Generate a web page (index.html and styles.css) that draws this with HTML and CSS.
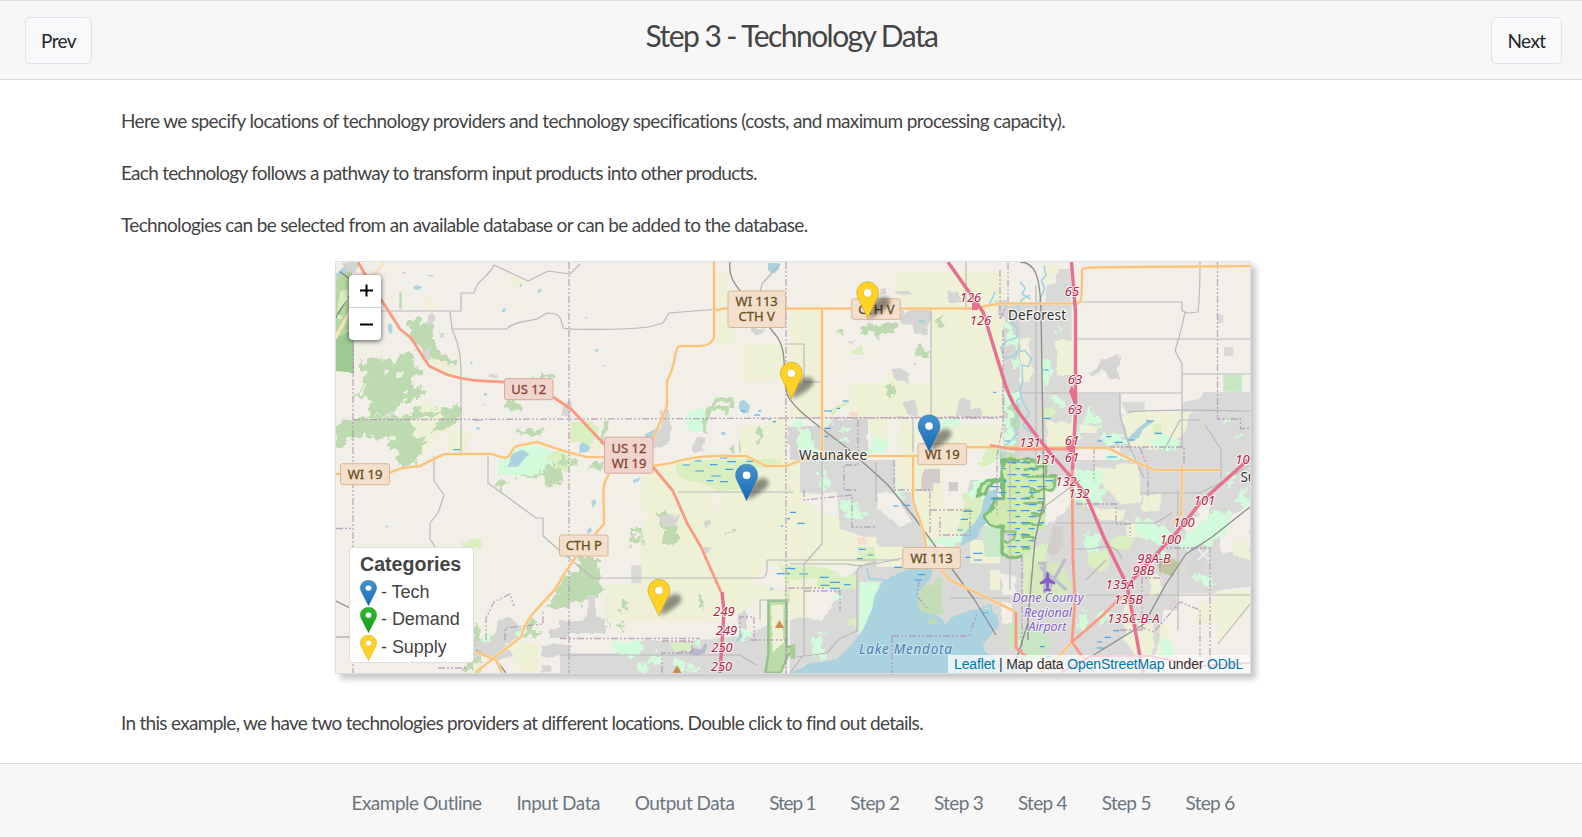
FILE: index.html
```html
<!DOCTYPE html>
<html lang="en">
<head>
<meta charset="utf-8">
<title>Step 3 - Technology Data</title>
<link rel="stylesheet" href="styles.css">
</head>
<body>
<header class="topbar">
  <button class="btn">Prev</button>
  <h1 class="title">Step 3 - Technology Data</h1>
  <button class="btn next">Next</button>
</header>
<main class="content">
  <p class="line l1">Here we specify locations of technology providers and technology specifications (costs, and maximum processing capacity).</p>
  <p class="line l2">Each technology follows a pathway to transform input products into other products.</p>
  <p class="line l3">Technologies can be selected from an available database or can be added to the database.</p>
  <div class="map">
    <svg class="tiles" viewBox="336 262 914 411" width="914" height="411">
      <defs>
        <pattern id="marsh" width="50" height="36" patternUnits="userSpaceOnUse"><path d="M2 8h27M26 26h23" stroke="#3d9ee6" stroke-width="3.500"/></pattern>
        <linearGradient id="blue" x2="0" y2="1"><stop stop-color="#4593cf"/><stop offset="1" stop-color="#1769b9"/></linearGradient>
        <linearGradient id="green" x2="0" y2="1"><stop stop-color="#35b935"/><stop offset="1" stop-color="#129c18"/></linearGradient>
        <filter id="soft" x="-50%" y="-50%" width="200%" height="200%"><feGaussianBlur stdDeviation="2"/></filter>
        <filter id="rough" x="-20%" y="-20%" width="140%" height="140%"><feTurbulence type="fractalNoise" baseFrequency=".045" numOctaves="3" seed="4"/><feDisplacementMap in="SourceGraphic" scale="44" xChannelSelector="R" yChannelSelector="G"/></filter>
        <filter id="uneven" x="-20%" y="-20%" width="140%" height="140%"><feTurbulence type="fractalNoise" baseFrequency=".03" numOctaves="2" seed="9"/><feDisplacementMap in="SourceGraphic" scale="22" xChannelSelector="R" yChannelSelector="G"/></filter>
        <g id="pin"><path d="M12.5.5C5.8.5.5 5.9.5 12.5c0 3 1.200 5.700 2.600 8.200L12.500 40.500l9.400-19.800c1.500-2.700 2.600-5.200 2.600-8.200C24.500 5.900 19.200.5 12.500.5z" stroke-opacity=".55"/><circle cx="12.500" cy="12.700" r="4.500" fill="#fff" stroke-opacity=".4"/></g>
        <path id="shade" d="M0 1 3-12C7-20 18-24 21-18S10-4 0 1z" fill="#000" opacity=".42" filter="url(#soft)"/>
      </defs>
      <rect x="330" y="255" width="930" height="425" fill="#f2efe9"/>

      <!-- land cover, north west -->
      <g transform="translate(330 255) scale(.33333)">
        <path class="wood" d="M245 192h28l2 18h28l8 22-8 20 17 10 6 28 42 22 12 16 8 8h-30l-28-12-44-18-20-30-30-30 8-22-14-14z"/>
        <path class="wood" d="M122 302l24 12 28-8 16 18 20-18 22-8 20 10 2 24 24 2-4 26-34 14 6 16 38 14-6 20-30 2-10 18-26-6-4 22-22 8 4 16h-80l16-44-18-20-34 22 30-58 12-28-30-18 2-24 22 8z"/>
        <path class="land" d="M196 352l30-4-8 14-20 6zM160 340l16 6-10 12zM216 412l20-4-6 14z"/>
        <path class="farm" d="M300 300l60 32 30 4v30l-40-8-42-28z"/>
        <path class="farm" d="M180 500l60-6 20-48 50-4 26 32 56-10-10 40-60 40-20 40-32 12-28 20-44-6z"/>
        <path class="wood" d="M15 514l60-26 100-2 60-10 24-18 20 14 50-4 30-14 34-10v44l-44 38h-46l-20 30-16 50-40 36-22-4-2-52-28-8 8-20-30-10-40-4-60 12-38 26z"/>
        <path class="farm" d="M240 500l40-16 30 6 20-16 14 14-30 20-10 26-40 20-14-10 10-24zM176 544l26 4-4 12-20-4z"/>
        <path class="wood" d="M522 430l34 10 22 14-2 12-56-4zM560 524h80l-10 26-24-8-8 10-10-14-24 12zM615 360h50v14h-50z"/>
        <path class="farm" d="M356 528h60v74h-60zM610 372h44l24 22v18h-56zM540 64l22-2 12 20-10 14-18-2zM284 118l34 36-4 14h-26z"/>
        <path d="M208 112h7v50h-7z" fill="#bddab1"/>
        <path d="M16 250l56-30v140l-14-8-42-4z" fill="#9cca91"/>
        <path d="M16 80l20-40 30-2v180l-50 36z" fill="#b5d7a0"/><path d="M16 60l40-38h20l-30 30-28 18z" class="water"/>
        <path d="M36 24h56l-20 30-24-4z" fill="#d0d4d0"/><path d="M30 50l30 22M16 190l40-66" stroke="#7f8580" stroke-width="4" fill="none"/>
        <path d="M30 110l24-8v30l-34 40zM22 180h14v12H22z" fill="#d8ecc0"/>
        <path class="water" d="M175 205l12 4v22l-8 8-5-14zM250 95l10-5 16 5-10 9-14-1zM296 60h13v4h-13zM218 50h8v5h-8zM570 84l8 8-8 4zM622 108l10-8 4 6-10 8zM515 165l10-8 2 12-10 3zM418 322l10-4-2 10zM462 414h9v8h-9zM440 516h9v8h-9zM460 445l8 6-4 2zM430 494h28v4h-28z"/>
        <path class="town" d="M292 180l20-4 4 14-12 22-14-8zM326 230l18 10 4 14-14-4zM284 288l22-4-8 22-16 2zM530 372h28v8h-28zM478 356h24v14h-24zM706 466l14-10v30l-14-2z"/>
        <path d="M540 588l60-20 70 20 50 12v36H500z" fill="#d2fbdb"/><path class="water" d="M545 598l30-14 24 12-26 26-40 12z"/>
        <path class="pale" d="M650 600l40-12 30 14v28h-70z"/><path d="M370 584h20" class="blue"/>
      </g>

      <!-- land cover, north centre -->
      <g transform="translate(560 255) scale(.33333)">
        <path fill="#eff1d7" d="M466 54l36 4v50l20-4v165h-56zM545 266h135v362H500l40-40v-78h86v-54l-24-20v-56h-57z"/>
        <path class="land" d="M600 376h70v110h-70zM500 270h44v240h-44z"/>
        <path class="pale" d="M30 500h64l26 30-28 38-62-4z"/><path class="farm" d="M86 566l50-10-6 30-40 10z"/>
        <path class="mint" d="M378 478l28-18h26v66h-50z"/>
        <path d="M436 534l-4-40 12-30 20-26 20-6 30 6v24M456 460l44-2 4 26" fill="none" stroke="#bddab1" stroke-width="11" class="wobble"/>
        <path class="wood" d="M592 516h17v34l-14 12-6-24zM500 586l24-10 6 30-16-2zM0 604l40 4 20 20H0z"/>
        <path d="M536 540l8 50-6 4zM130 500l16-6-2 30-12 14-6 30h-7l6-40 8-10z" fill="#bddab1"/>
        <path class="town" d="M300 466l24-4 4 40 4 50-20 26h-30l-14-18 24-36 12-10zM404 545l30 6-4 36-24 8-12-16 10-8zM572 218l46 4-22 20-22-10zM8 456l28-16 4 24-34 24z"/>
        <path class="water" d="M625 24h32v18l-12 12h-14l-8-12zM538 440l14-6 18 18-4 20-16 4-14-16zM256 538l34-18-6 24-22 10-6-6zM58 570l12-8 22 14-8 14-26 4zM106 282h8v8h-8zM484 530h12v10h-12zM76 186h6v4h-6zM130 330h6v4h-6z"/>
        <path class="blue" d="M542 468h14M594 468h10M582 480h18M604 492h10M624 492h8M638 500h10"/>
        <path class="mint" d="M700 490h20v100h-20z"/><path class="town" d="M682 516h38v54h-38z"/>
      </g>

      <!-- land cover, Waunakee to DeForest -->
      <g transform="translate(790 255) scale(.33333)">
        <path fill="#eff1d7" d="M0 165h105v325H0zM315 50h330v440H180V382h110v-32h130V165l-85-4v-38h-20z"/>
        <path class="land" d="M306 270h114v110h-70l-40-30z"/>
        <path class="wood" d="M216 214l36-8 16 10 48-8-2 22-36 2-12 14-24-14-30 2zM370 276l20-8 26 20v22l-30-4zM436 196l20-8 4 20-14 12-14-8zM288 396l28-4-2 28-26-2zM358 328l20-4-10 12zM138 230l20-6 10 12-16 4z"/>
        <path class="pale" d="M180 288l32-16 10 28-42-2zM106 474l60-38 14 6-54 44z"/>
        <path class="town" d="M332 165h88v40l-8 36-40-4v-24l-40-6zM476 106l34 6v32h-34zM314 108h38l10 10-24 6-24-8zM268 102h20v18h-16zM306 346l30-4 22 14-2 26-34-10zM344 440l34-8 6 18-4 34-30-4zM504 434h38v24l30 4v26h-70zM168 262l34-10-24 18z"/>
        <path class="town" d="M40 516h64l30-24h100v138H0v-100zM640 150h80v480h-80zM612 140l40-6v60l-30-18z"/>
        <path fill="#eff1d7" d="M240 492h130v138h-40v-60l-90-20zM376 510h262v60l-80 4-190-20z"/>
        <path class="mint" d="M236 560l52-16v50h-44zM448 496l56-6v24l-48 4zM38 516l40 60 16 20-60-10-20-30zM650 200l18 4v30l20 50-40-20zM645 434h30v160h-30z"/>
        <path class="mint" d="M92 494l40 8-24 16zM134 516l44 4-8 24zM140 550l40 6-8 14zM656 316l44-4-20 26zM640 410l60 10-8 40-46 10z"/>
        <path class="pale" d="M604 572h30v30l-40 28h-30z"/><path class="wood" d="M664 450l24-10 20 30-14 40-28 20zM640 590l40 4v34h-40z"/>
        <path class="peach" d="M176 474l30-6-2 14-24 8z"/><path class="land" d="M286 500h40v60h-40z"/>
        <path class="water" d="M386 194h20v10h-20z"/>
        <path class="blue" d="M158 438h18M102 468h24M140 460h10M104 520h18M104 544h10M610 412h8M646 558h16M652 574h12"/>
        <path class="stream" d="M720 120l-22 12-14 20 8 20-28 30 20 20-4 26-30 10-18 20 12 34 30-10 14-24 20 6 12 30-20 20 8 34-20 30 12 20-20 20 6 30-14 40 10 30-24 24-26 20v60M720 190l-20 16M616 110l-14 30-8 16"/>
      </g>

      <!-- land cover, north east -->
      <g transform="translate(1020 255) scale(.33333)">
        <path fill="#d9d9d8" d="M0 150h155v480H0zM80 90l28-6v-42h44v100H76zM162 416h138v56l24 20 10 86H162zM304 440h70v28l-50 20zM490 440l50-8 10-20 140-2v220H300v-60h100l80-40zM612 276h28v28h-28zM594 178l16 2v24h-16z"/>
        <path class="town" d="M240 312l36-6 28-6-4 30-14 10 16 36-34-4-16-32-28 22-20-6 30-16z"/>
        <path class="farm" d="M0 250h26l10 90-8 40H0zM108 256h52v104h-52zM302 488l40-16h178l-40 80-60 26h-86zM78 500h80v76H78zM180 510h50v24h-50zM72 30l40 4-4 24-36 26z"/>
        <path class="mint" d="M100 230l26-12-6 14zM68 300l36 44-30 60-8-20zM86 410l32 10 22 30-16 8-30-20zM196 482l20-34 8 34 26 14-4 18-30-10-20 8zM170 510l20 36-12 14zM250 540l60-4 8 28-44 10-30-12zM380 552l60-12 40 28-20 20-60-10zM262 590l30 14 40-6 26 20-60 12-50-4zM612 496l28-20-6 24zM650 530l14 8-8 12z"/>
        <path class="pale" d="M66 460l36-6 8 26-44 18zM394 512h30v30l-20-6z"/><path fill="#c7e7c5" d="M610 360h56v50h-56z"/>
        <path class="water" d="M322 552l34-34 28-22 16 4-30 22-14 26-26 12z"/>
        <path class="stream" d="M72 32l6 30-14 14 10 24-10 24-8 20M0 80l16 20-10 16 26 16M0 290l14-4 20 24-8 24-20-4 2 50-8 26 8 36 20 30-20 40 30 24"/>
        <path class="blue" d="M70 345h16M378 498h24M404 535h22M324 555h20M260 545h14M284 562h24M232 558h14M262 606h28M70 490h22"/>
        <path class="water" d="M300 612h10v8h-10z"/>
      </g>

      <!-- land cover, south west -->
      <g transform="translate(330 460) scale(.33333)">
        <path fill="#d2fbdb" d="M506 0h160v44H504z"/><path class="water" d="M544 0h36l-16 20h-34z"/>
        <path class="pale" d="M666 0h54v34l-54-4zM392 244l20 6 8-14h28v26h-56z"/>
        <path class="wood" d="M506 56h24v18l-16 20-10-12zM546 44l64 4 30-12 10-20 44 12 6 20-20 34-30-8-14-20-40 4zM720 360l-40 24 10 14-30 20-12 30 48-8 24 10zM590 484l24 2 4 26 16 12-46 10-12-12zM390 584l56-4 6 56h-46z"/>
        <path class="town" d="M430 540l60-16 14-34 40-22 20 20 10 40-30 20 14 30-48 26-40-14h-40zM636 552h84v40h-84zM660 506h60v28h-60zM634 616h30v22h-30z"/>
        <path class="mint" d="M440 540l40-24 4 30zM560 510l26 14-22 12z"/><path class="farm" d="M526 550h100v86h-56zM432 610h20v24h-20z"/>
        <path class="wood" d="M432 490h14v40l20 14-34 10z"/><path class="water" d="M166 197h8v5h-8z"/>
      </g>

      <!-- land cover, south centre -->
      <g transform="translate(560 460) scale(.33333)">
        <path fill="#eff1d7" d="M250 40L350 0h370v310l-100 8-40 54 140 30v30H575l-80 50H134V374l108-2V264l16-110-20-20z"/>
        <path class="land" d="M460 100h26v50h-26zM575 424h50v130h-50z"/>
        <path class="pale" d="M350 12l100-14h210v20l-70 4 4 36-56 30-60 6-60-26-60-16z"/>
        <path class="pale" d="M690 20h30v100l-30-20zM660 318l60 6v50l-40-4z"/>
        <path class="wood" d="M0 0h20v16H0zM0 350l30-12 18 4 10-54h54v42l14 10-4 62-26 4-14 24-50-8-20 10-12-10zM292 154h26v14l34 30 2 40-34 22-24-10 20-24-10-8zM496 222l20-20 18-2-16 14zM412 408l24-4-2 42-16-4zM176 430l28-8-2 36-20-6zM180 486l20 6-16 20zM80 620h48l-10 20H70zM140 486l8 12-8 8zM100 8l34 4-14 24-36-8z"/>
        <path d="M214 204h34v48l-8-16v-22h-18l-2 14 20 10-4 20-26-12z" class="wood"/>
        <path class="town" d="M0 482l60-2 24-24v-54h24v74l28 4v42H0zM296 170l64-8-16 34-34 12zM430 190l24-6 2 14-20 6zM430 262l24-4-20 20zM534 460l30-10-4 60-24-6z"/><path d="M214 316h30v54h-30zM0 580h160l44-8 50-34 76 8 94-6 60-6 80-10 60-30 30 30v120H0z" fill="#d9d9d8"/>
        <path class="mint" d="M164 548l80-10 2 30-20 20-46-6-30-16zM264 594l22-14 24 16-10 14-34-2zM230 610l40 6-20 20zM344 598l28 4 2 36-20-6zM380 626l40-8v20zM404 530l26 12-18 12zM528 520l24-10 28 10-40 24z"/>
        <path d="M352 564l30-6 40 12 14-20 6 2-8 26-24 10-30-10-24-4z" fill="#b9b9cc"/>
        <path class="pale" d="M330 550l60-6 10 22-50 12zM672 390h48v46h-48z"/>
        <path class="water" d="M220 60l22-8-6 12-16 6zM94 124l12-8 2 14-10 14zM82 210l10-10 4 14-14 8zM60 432l10 6-4 6zM630 383h10v8h-10zM530 536l20-20-6 20-18 12z"/>
        <path d="M625 422h55v140l28-8v30l-22-2-24 56h-46l8-50h1z" fill="#bbdca8" stroke="#91c387" stroke-width="7"/><path class="farm" d="M634 434h36v110l-32 34z"/>
        <path class="blue" d="M368 15h22M404 3h20M450 14h22M406 33h26M454 48h28M502 5h26M496 28h24M480 65h24M534 70h16M690 157h18M682 176h14M700 190h20M678 325h18M650 341h24M680 341h40M662 198h8M430 -8h22M480 -6h22M560 4h20M440 62h20"/>
      </g>

      <!-- land cover, Lake Mendota -->
      <g transform="translate(790 460) scale(.33333)">
        <path fill="#eff1d7" d="M0 0h100v60l-60 60 60 42 70 18 34 50v84H0zM0 360h200v110H0z"/>
        <path fill="#d9d9d8" d="M30 0h288v96h94l10 160 60 16 20-40 60-40 160 40v408H120l-70-30-40 30H0V480l80-20 60-80 70-60 100-20-60-60-100-34-10-110-50 6-60-4V20zM540 60l60 0v100h-80z"/>
        <path fill="#eff1d7" d="M370 0h90v140l74 14-10 60-60 28-60-14-30-110h-4zM316 0h54v90h-54zM448 150l90-8-20 60-68-10zM200 230h60v80h-58zM260 260h80v60h-80zM540 240h90v70h-90zM20 400l30-6v80H0v-50zM600 330h30v60h-30z"/>
        <path class="pale" d="M80 350l120-6v48l-110-8zM200 260h54v46h-50zM0 320l110 4 50 18-70 10H0zM520 100h64l-10 90-50 40h-26l20-60zM176 470h24v30l-30-12z"/>
        <path class="mint" d="M100 30l20 34-16 30-20-44zM140 120l60 8 28 44-40 10-28-26zM410 240l110-16 10 20-40 16-80-4zM540 66h44v50l-44-6zM60 530l50-10-16 40 12 44-36-26zM110 390l40 20-20 20zM280 120l24 10-16 20zM330 60l20 40-24 20z"/>
        <path d="M210 366h58l-4 40-24 56-30 80h-4z" fill="#d2fbdb"/><path d="M575 200h62v90h-52z" fill="#c9e9ca"/>
        <path class="land" d="M260 100h48l58 80-34 20-70-50zM50 400l90-8-16 50-26 40-44-10zM416 260h40v20h-40zM636 430h30v60h-30zM636 344h44v60h-44z"/>
        <path class="peach" d="M204 232h26v22h-26z"/><path d="M404 26h46v44h-20v24h-36V50zM476 66h28v28h-28z" fill="#d2cdca"/>
        <path fill="#aad3df" d="M0 640l40-20 10-8 90-14 40-40 40-50 26-60 8-42 24-40 50-28 54-20 46 12-8 30-14 10-6 66 18 20 40 20 8 20 16-22 22-10 40-14 54-2 26 22 4 24-22 26-28 34 8 22 50 28 60 14v42zM588 96l40-12-8 20-10 40-12 36-30 30-4 22-18 10-36 16 10-36 34-34 18-30z"/>
        <path d="M384 400l20-24 30-2 4-20h18v90l8 14-30 6-40-8-10-20z" fill="#c4ddb7"/><path class="wood" d="M412 474l26 6-6 22-14-6z"/>
        <path class="fen" d="M636 0h94v310l-40-22-34 6-20-12v-80l-40-10-12-26 24-20v-30h30V60l-30 6-20 34-26 12 10-30 20-20 44-6z"/>
        <path d="M640 215h36l-4 22-22 12-12-10z" fill="#dddcd4" stroke="#8bc484" stroke-width="7"/>
        <path fill="url(#marsh)" d="M640 0h80v280h-70V120h-50V70h40z"/>
        <path class="blue" d="M0 157h18M22 190h22M0 326h16M28 342h26M90 352h26M120 367h30M92 376h26M120 385h30M162 374h20M206 268h22M200 296h18M234 285h16M312 322h24M372 360h24M384 344h20M520 154h28M512 178h22M550 280h28M552 300h24M526 292h16M310 138h16M340 136h20M580 458h14M502 210h16"/>
        <path d="M562 450l40-14 4 20-34 16-14-10zM578 438l14 32" class="stream"/><path class="stream" d="M230 324l8 32 60 6 10-14"/>
        <path d="M652 490h68v70l-68-2z" fill="#cfe6c4"/><path d="M0 556l16-4v44H0z" fill="#a9cc99"/>
      </g>

      <!-- land cover, south east -->
      <g transform="translate(1020 460) scale(.33333)">
        <path fill="#d9d9d8" d="M80 0h610v380l-90 10-80 60-90 0-20 190H0V300l30-60z"/>
        <path class="land" d="M80 40l50 20 30 60-20 30-60 50-10-60zM540 120l30 4v60l-60 50-20-30 50-40zM600 190l90-60v150h-90zM0 520h60v120H0z"/><path d="M470 400h220v240H400l30-120 40-40z" fill="#f2efe9"/>
        <path class="farm" d="M290 10h70v120h-64l-50-60h-30V22h74zM196 130l60 20h60v30H220zM366 104h56v50h-56zM310 430h30v60h60v120h-36l-50-70zM320 180h50v54h-50zM392 346h30v60h-32zM590 390h100v60l-100 100zM640 240h50v60l-50-12zM540 420h50v70h-60zM420 500l30-20v120h-40z"/>
        <path class="mint" d="M168 30l80-4v100l-50 6-40-10zM350 170l60 20 50 30-20 40-60-20-30-20zM480 240l70-60 50-30 30 10v40l-50 50-70 20-30-10zM200 220l40 6-6 60-40-20zM176 455l24 6 4 50-20 8zM230 460l40 8-10 20-26 20zM660 80l30 30v30l-44-10zM520 340h30l40 30-36 10zM420 270l30 10-10 50-20-10zM420 540h40v50h-40zM620 30l30 20-20 30z"/>
        <path fill="#c9e7c4" d="M0 510l70-4 20 44-10 50H0z"/><path d="M204 280l60-10 6 50-30 16-36-20zM276 230l50-4 20 20-20 20h-50zM60 250h20v90l-10 30-40 50H10V280z" class="pale"/>
        <path d="M410 306l40-14 24 14-14 44-40-14z" fill="#c4c3a0"/><path d="M100 194l30 6v60l-30 30-20-14z" fill="#d3cecb"/><path d="M506 260h50v86h-50zM444 410l28 10v30l-28-4z" class="town"/>
        <path d="M10 420l20-80 20-30 70 0 40 60-20 40-70 10z" fill="#d6e8bc"/><path d="M54 310h20v90M60 320l80 70M136 296l-54 100" stroke="#bdbdd0" stroke-width="10" fill="none"/>
        <path d="M0 0h80v48h22v40H78v66l-4 54H50v28l-26 44H0z" fill="#d0ebb0"/>
        <path d="M4 4h46v22H10M12 46h90v42H36v26H6M10 130h60v30H30M6 190h64M8 230h40M4 268h28M54 20h24v30" fill="none" stroke="#86c180" stroke-width="8" class="wobble"/><path fill="url(#marsh)" d="M0 0h52v48h48v34H74v120H44v70H0z"/>
        <path class="blue" d="M280 512h18M254 532h18M232 546h14M230 564h20M60 560h14M80 590h14"/>
      </g>

      <!-- municipal boundaries -->
      <g class="bound">
        <path d="M353 345v328M336 528.500h17M336 637h18M353 419.700l216-.6 140-.6 80.500-.5 213-1M569 262v411M786 262v411M354 637l-18 0M560 638.500h140M1003 330v95l-6 30v60M1217.500 262v157h23v9.500h10M800 418h200M858 420v45h-14v25h12M1000 270v50l8-18v-40"/>
        <path d="M1040 447h144v18M1094 447v35M1140 448l8 20v30M1022 555v118M1076 504h40v20h14v12M1120 630h22v-52h18v-30h50v125M1124 620l30 12 26-30 20 8v46h12M894 460v30h36v45M804 490l0 10 48-5v32h24M804 591h36v20M892 636h77l8-22M786 620v60M892 636v37M919 580l-2 16 10 12M930 510h40v25h-30v-20"/>
        <path d="M486 640v-22l8-16 16-8 4 12M505 640v-12l38-4v-14M662 641h30v12h-30v20M740 637l0-20h14v20M750 640h36M788 588h36M438 668h30"/>
      </g>

      <!-- minor roads and railways -->
      <g class="minor">
        <path d="M380 311h81v-18h13c3-14 15-16 20-28l34 16 20-10 22 3 10-10M450 311l2 18c8 18 9 30 9 48v79M453 329h54c6-8 24-8 30-10l10-6c10 0 14 2 16 15 5 2 60 2 86-1l14-4 6-10 50-4M434 456v25l10 14-6 18-8 10v16l16 24M488 456v27l48 35h7v18l16 14 34 28h170c4-2 4-5 4-18h132"/>
        <path d="M678 492h115M793 262v-4M780 264l-18 20-6 26M787 344h17v38h18M931 310v142M966 262v45M1036 285v180M1073 302h109v9l6 2 10-1c2-18 2-40 2-50M1185 312c-10 50-14 30-3 52v84M1075 339h175M1182 374h68M1020 393h162M1120 394v22l10 32M1128 412c50-4 80-1 122-1M913 452v-35M822 456v88l-18 20v90l-14 19M790 564h58c6 2 10 4 55-6M857 571v60l-18 8-12 14-30 4M857 571c2-6 10-8 20-9"/>
        <path d="M1056 523h100l16-10M1072 549h20c20-6 26 0 30 10M1060 595h190M1178 490v140M1086 580l20-20M1130 448l14 30M1200 420h-20l-16 30M1250 604l-32 40M1040 510l40-30M950 598h60M1010 460v130M876 462v40M760 620v-20h30M560 655h180l16 10M1205 425l16 24v30M1140 493h60l20-10 30-18"/>
        <path class="rail" d="M730 262c-2 15 5 22 14 34l34 42c8 14 5 24 8 52 2 15 26 31 60 57l42 38 26 32 60 82 22 36M1020 262c15 0 20 14 21 48l2 130 1 60-9 40-7 80 0 20M1012 673l16-50M1250 507l-38 30-26 17-20 30-22 40-65 40M336 601l14 7M476 650l20 10 10 13"/>
      </g>

      <!-- main roads -->
      <g class="casing"><path d="M714 262v45c3 6 7 2 8 1M714 296v42c-2 5-6 8-15 8h-20c-6 6-1 14-12 35v25l-15 35M722 308.500h250l28-5h76c6 0 6-4 6-34 2-3 12-2 168-3.500M822 310v145M336 474h5M388 474c14-8 20-6 32-8l24-12h48c24 10 15-4 25-8l20-4 30 10 20 5h20l10-8M653 466l18-3c20-6 40-8 60-7h15l20 10h20c12-4 15-6 25-10h109l30-1 18-8 140 1 30 15 17 7h66M913 456v44c3 15 11 22 13 48M941 570l9 10 66 32M1182 466l-1 48-8 10M609 474c-8 12-5 15-5 50l-9 10M576 557l-14 20c-7 20-34 32-41 60l-26 20-20 16M476 652l20 8 6 13M1072 642l-18 19-14 12M384 262l-12 16-20 30-18 32"/></g>
      <g class="orange"><path d="M714 262v45c3 6 7 2 8 1M714 296v42c-2 5-6 8-15 8h-20c-6 6-1 14-12 35v25l-15 35M722 308.500h250l28-5h76c6 0 6-4 6-34 2-3 12-2 168-3.500M822 310v145M336 474h5M388 474c14-8 20-6 32-8l24-12h48c24 10 15-4 25-8l20-4 30 10 20 5h20l10-8M653 466l18-3c20-6 40-8 60-7h15l20 10h20c12-4 15-6 25-10h109l30-1 18-8 140 1 30 15 17 7h66M913 456v44c3 15 11 22 13 48M941 570l9 10 66 32M1182 466l-1 48-8 10M609 474c-8 12-5 15-5 50l-9 10M576 557l-14 20c-7 20-34 32-41 60l-26 20-20 16M476 652l20 8 6 13M1072 642l-18 19-14 12"/></g>
      <g class="trunk"><path d="M358 262l8 14 34 53 11 9 18 28 19 9c20 6 35 6 56 7M553 397l18 12 34 36M653 467l20 24 14 32 14 24 20 45M990 445l20 4h65M1072 470l1 90 2 40-3 42 14 20M1072 642l30-26 20-20M1016 612v36l10 8"/></g>
      <g class="motor"><path d="M948 262l35 50 23 75c8 20 10 22 30 48l14 18 35 40 20 47 22 45 16 88M1071.500 262l4 50v100l-3 58M722 592l2 20-4 61M1125 588l52-56 24-30 49-44"/><path class="ghost" d="M1060 673l30-17h60l50 10 50-3"/></g>
      <path d="M972 301h6v9h-6zM1072 385l5 12-3 8-5-14zM1069 440l6 6-2 10-7-8z" fill="#e8708f"/>

      <!-- road shields -->
      <g class="shield red"><rect x="504.500" y="378.700" width="48.500" height="21" rx="2"/><text x="528.700" y="393.800">US 12</text><rect x="604.500" y="437.200" width="48.500" height="36" rx="2"/><text x="629" y="453">US 12</text><text x="629" y="467.800">WI 19</text></g>
      <g class="shield">
        <rect x="728" y="291" width="57.500" height="36.500" rx="2"/><text x="756.700" y="306">WI 113</text><text x="756.700" y="321">CTH V</text>
        <rect x="851.800" y="298.800" width="48.500" height="20.500" rx="2"/><text x="876.500" y="314">CTH V</text>
        <rect x="340.500" y="463.700" width="49" height="21" rx="2"/><text x="365" y="479">WI 19</text>
        <rect x="918" y="443.700" width="48.500" height="21" rx="2"/><text x="942.300" y="459">WI 19</text>
        <rect x="559.500" y="535" width="48.500" height="21" rx="2"/><text x="583.800" y="550">CTH P</text>
        <rect x="902.800" y="547.500" width="57.500" height="21" rx="2"/><text x="931.500" y="562.500">WI 113</text>
      </g>

      <g class="exit">
        <text x="970.500" y="302">126</text><text x="980.500" y="324.500">126</text><text x="1072" y="296">65</text><text x="1075" y="383.500">63</text><text x="1075" y="413.500">63</text><text x="1072" y="444.500">61</text><text x="1072" y="462">61</text><text x="1030" y="446.500">131</text><text x="1045.500" y="463.500">131</text><text x="1066" y="485.500">132</text><text x="1079" y="498">132</text><text x="1246" y="464">102</text><text x="1204.500" y="504.500">101</text><text x="1184" y="527">100</text><text x="1170.500" y="544">100</text><text x="1154" y="562.500">98A-B</text><text x="1143.500" y="575">98B</text><text x="1120" y="588.500">135A</text><text x="1128.500" y="603.500">135B</text><text x="1133.500" y="622.500">135C-B-A</text>
        <text x="724" y="615.500">249</text><text x="726.500" y="635">249</text><text x="722" y="652">250</text><text x="721.500" y="670.500">250</text>
      </g>
      <g class="place"><text x="833" y="459.700" textLength="68">Waunakee</text><text x="1037" y="320.300" textLength="58">DeForest</text><text x="1252.500" y="482">Sun</text></g>
      <text class="lake" x="905.500" y="653.500" textLength="93">Lake Mendota</text>
      <g class="airport"><text x="1048" y="601.500" textLength="71">Dane County</text><text x="1048" y="616.500" textLength="48">Regional</text><text x="1047.500" y="631" textLength="38">Airport</text></g>
      <path d="M1047.500 572c-1 0-1.700 2-1.700 6l-6 4.500v2l6-1.500.5 5-2.500 2v1.500l3.700-.8 3.700.8V590l-2.500-2 .5-5 6 1.500v-2l-6-4.500c0-4-.7-6-1.700-6z" fill="#8560c7"/>
      <path d="M779.500 620l4.500 8h-9zM677 665l5 9h-10z" fill="#cf8b4b"/>
      <path d="M1198 549l11 11m0-11l-11 11" stroke="#eeecea" stroke-width="2"/>

      <!-- site markers -->
      <use href="#shade" x="868.700" y="318"/><use href="#shade" x="792.300" y="398"/><use href="#shade" x="930" y="450"/><use href="#shade" x="747.300" y="499"/><use href="#shade" x="660" y="615"/>
      <g class="yellow"><use href="#pin" transform="translate(856.300 281.400) scale(.91)"/><use href="#pin" transform="translate(780 361.800) scale(.91)"/><use href="#pin" transform="translate(647.500 579) scale(.91)"/></g>
      <g class="bluepin"><use href="#pin" transform="translate(917.700 414.500) scale(.91)"/><use href="#pin" transform="translate(735.200 463.700) scale(.91)"/></g>
    </svg>
    <div class="zoom">
      <span class="zbtn"><svg width="13" height="13" viewBox="0 0 13 13"><path d="M0 6.500h13M6.500 .5v12" stroke="#000" stroke-width="2"/></svg></span>
      <span class="zbtn"><svg width="13" height="13" viewBox="0 0 13 13"><path d="M0 6.500h13" stroke="#000" stroke-width="2"/></svg></span>
    </div>
    <div class="legend">
      <strong class="ltitle">Categories</strong>
      <div class="lrow"><svg class="bluepin" width="17" height="26" viewBox="0 0 25 41" preserveAspectRatio="none"><use href="#pin"/></svg><span>- Tech</span></div>
      <div class="lrow"><svg class="greenpin" width="17" height="26" viewBox="0 0 25 41" preserveAspectRatio="none"><use href="#pin"/></svg><span>- Demand</span></div>
      <div class="lrow"><svg class="yellow" width="17" height="26" viewBox="0 0 25 41" preserveAspectRatio="none"><use href="#pin"/></svg><span>- Supply</span></div>
    </div>
    <div class="credit"><a>Leaflet</a> | Map data <a>OpenStreetMap</a> under <a>ODbL</a></div>
  </div>
  <p class="line l4">In this example, we have two technologies providers at different locations. Double click to find out details.</p>
</main>
<footer class="bottom">
  <a>Example Outline</a><a>Input Data</a><a>Output Data</a><a class="one">Step 1</a><a class="step">Step 2</a><a class="step">Step 3</a><a class="step">Step 4</a><a class="step">Step 5</a><a class="step">Step 6</a>
</footer>
</body>
</html>
```
FILE: styles.css
```css
* { box-sizing: border-box; }
body { margin: 0; height: 837px; overflow: hidden; display: flex; flex-direction: column; background: #fff; color: #444; font-family: Lato, sans-serif; font-size: 19px; }
.topbar { height: 80px; flex: none; display: flex; justify-content: space-between; align-items: flex-start; padding: 16px 20px 0 25px; background: #f7f7f7; border-top: 1px solid #dfdfdf; border-bottom: 1px solid #d8d8d8; }
.btn { width: 67px; height: 47px; padding: 0 0 1px; border: 1px solid #dfe2e8; border-radius: 5px; background: #f8f9fa; color: #212529; font: 19px Lato, sans-serif; letter-spacing: -.6px; }
.next { width: 71px; }
.title { margin: 0; font-size: 30px; font-weight: 400; line-height: 37px; letter-spacing: -1.55px; white-space: nowrap; }
.content { flex: none; height: 683px; padding: 15px 121px 0; }
.line { margin: 0; height: 52px; line-height: 52px; white-space: nowrap; }
.l1 { letter-spacing: -.622px; }
.l2 { letter-spacing: -.735px; }
.l3 { letter-spacing: -.65px; }
.l4 { margin-top: 23px; letter-spacing: -.71px; }
.map { position: relative; width: 916px; height: 413px; margin: 10px 0 0 214px; border: 1px solid #dbe0e5; box-shadow: 5px 5px 6px rgba(0,0,0,.22); }
.tiles { display: block; }
.bottom { flex: 1; display: flex; justify-content: center; gap: 34.800px; padding: 26px 0 0 4px; background: #f7f7f7; border-top: 1px solid #d8d8d8; color: #6c757d; line-height: 25px; white-space: nowrap; letter-spacing: -.5px; }
.one { letter-spacing: -1.150px; }
.step { letter-spacing: -.7px; }

.wood { fill: #bddab1; filter: url(#rough); }
.farm { fill: #eff1d7; filter: url(#uneven); }
.town { fill: #d5d5d4; filter: url(#uneven); }
.land { fill: #f2efe9; filter: url(#uneven); }
.water { fill: #aad3df; }
.mint { fill: #d2fbdb; filter: url(#rough); }
.pale { fill: #d9efc0; filter: url(#uneven); }
.peach { fill: #f3dccb; }
.wobble { filter: url(#uneven); }
.fen { fill: #d0ebb0; stroke: #7fbd78; stroke-width: 10; stroke-linejoin: round; filter: url(#uneven); }
.blue { fill: none; stroke: #45a0e6; stroke-width: 3.500; }
.stream { fill: none; stroke: #a4d3e2; stroke-width: 5; stroke-linejoin: round; }
.bound { fill: none; stroke: #b294b4; stroke-width: 1.3; stroke-dasharray: 7 2 2 2 2 2; opacity: .8; }
.minor { fill: none; stroke: #b9b9bb; stroke-width: 1.2; stroke-linejoin: round; }
.rail { stroke: #8c8c8a; stroke-width: 1.3; }
.casing { fill: none; stroke: #fbe3bd; stroke-width: 3.2; }
.orange { fill: none; stroke: #f9c37b; stroke-width: 2; stroke-linejoin: round; }
.trunk { fill: none; stroke: #fa9a80; stroke-width: 2.8; stroke-linejoin: round; }
.motor { fill: none; stroke: #e8708f; stroke-width: 3.4; stroke-linejoin: round; }
.ghost { stroke-width: 2; }
.shield rect { fill: #f2e0cd; stroke: #d9b692; }
.shield text { font: 400 13px "Noto Sans", sans-serif; text-anchor: middle; fill: #6c4d1c; stroke: #6c4d1c; stroke-width: .3; }
.red rect { fill: #f0d5ce; stroke: #dca69a; }
.red text { fill: #8b4437; stroke: #8b4437; }
.exit text { font: italic 13px "Noto Sans", sans-serif; text-anchor: middle; fill: #b0263f; stroke: #fff; stroke-width: 2px; stroke-opacity: .75; paint-order: stroke; }
.place text { font: 13.500px "Noto Sans", sans-serif; text-anchor: middle; fill: #333; stroke: #fff; stroke-width: 2.500px; stroke-opacity: .7; paint-order: stroke; }
.lake { font: italic 13.500px "Noto Sans", sans-serif; text-anchor: middle; fill: #4d80b3; stroke: #fff; stroke-width: 2px; stroke-opacity: .4; paint-order: stroke; }
.airport text { font: italic 12.500px "Noto Sans", sans-serif; text-anchor: middle; fill: #8461c4; stroke: #fff; stroke-width: 2px; stroke-opacity: .6; paint-order: stroke; }
.yellow { fill: #ffd326; stroke: #b99313; }
.bluepin { fill: url(#blue); stroke: #24659b; }
.greenpin { fill: url(#green); stroke: #14841a; }

.zoom { position: absolute; left: 13px; top: 13px; width: 32px; height: 65px; border-radius: 4px; background: #fff; box-shadow: 0 1px 5px rgba(0,0,0,.65); }
.zbtn { display: flex; height: 33px; padding: 0 0 1px 2px; align-items: center; justify-content: center; }
.zbtn:first-child { border-bottom: 1px solid #ccc; }
.legend { position: absolute; left: 13px; top: 285px; width: 125px; height: 116px; padding: 4px 10px; border: 1px solid #ddd; border-radius: 4px; background: #fff; font: 18px/24px "Liberation Sans", Arial, sans-serif; }
.ltitle { display: block; margin-bottom: 2px; font-size: 19.600px; }
.lrow { display: flex; align-items: center; height: 27.500px; gap: 4px; letter-spacing: -.05px; }
.lrow svg { flex: none; position: relative; top: 1px; }
.credit { position: absolute; right: 0; bottom: 0; width: 302px; height: 18px; padding-left: 6px; line-height: 18px; background: rgba(255,255,255,.7); color: #333; font-family: "Liberation Sans", Arial, sans-serif; font-size: 14px; letter-spacing: -.13px; white-space: nowrap; }
.credit a { color: #0078a8; }
```
